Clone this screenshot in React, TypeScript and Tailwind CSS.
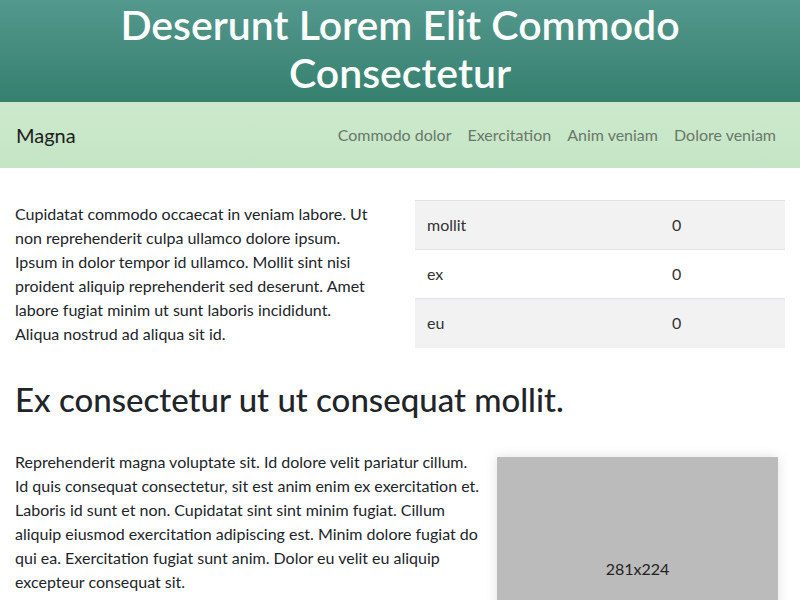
const NAV_LINKS = ['Commodo dolor', 'Exercitation', 'Anim veniam', 'Dolore veniam'];

const ROWS = [
  { name: 'mollit', value: 0, shaded: true },
  { name: 'ex', value: 0, shaded: false },
  { name: 'eu', value: 0, shaded: true },
];

export default function App() {
  return (
    <div className="min-h-screen bg-white text-[#212529] font-['Lato','Liberation_Sans',sans-serif]">
      {/* Title banner */}
      <header className="h-[102px] bg-gradient-to-b from-[#53988d] to-[#35806f] flex items-center justify-center px-4 pb-1">
        <h1 className="text-center text-white text-[41px] leading-[48px] font-semibold">
          Deserunt Lorem Elit Commodo Consectetur
        </h1>
      </header>

      {/* Nav */}
      <nav className="h-[66px] bg-gradient-to-b from-[#cde9cd] to-[#c5e5c5] flex items-center justify-between pl-4 pr-6">
        <span className="text-xl text-[#1c211c]">Magna</span>
        <ul className="flex gap-4 text-base text-[#6a786a]">
          {NAV_LINKS.map(l => (
            <li key={l}>{l}</li>
          ))}
        </ul>
      </nav>

      <main className="px-[15px]">
        <section className="flex gap-[30px] pt-8">
          <div className="w-[370px]">
            <p className="w-[358px] text-base leading-6 pt-[2px]">
              Cupidatat commodo occaecat in veniam labore. Ut non reprehenderit culpa ullamco dolore ipsum.
              Ipsum in dolor tempor id ullamco. Mollit sint nisi proident aliquip reprehenderit sed deserunt.
              Amet labore fugiat minim ut sunt laboris incididunt. Aliqua nostrud ad aliqua sit id.
            </p>
          </div>
          <table className="w-[370px] text-base text-[#333] border-collapse self-start">
            <tbody>
              {ROWS.map(r => (
                <tr key={r.name} className={`h-[49px] border-t border-[#dee2e6] ${r.shaded ? 'bg-[#f2f2f2]' : ''}`}>
                  <td className="w-[245px] px-3">{r.name}</td>
                  <td className="px-3">{r.value}</td>
                </tr>
              ))}
            </tbody>
          </table>
        </section>

        <h2 className="mt-[32px] text-[33px] leading-[38px] font-medium">
          Ex consectetur ut ut consequat mollit.
        </h2>

        <section className="flex mt-[32px]">
          <div className="w-[475px]">
            <p className="w-[465px] text-base leading-6">
              Reprehenderit magna voluptate sit. Id dolore velit pariatur cillum. Id quis consequat
              consectetur, sit est anim enim ex exercitation et. Laboris id sunt et non. Cupidatat sint sint
              minim fugiat. Cillum aliquip eiusmod exercitation adipiscing est. Minim dolore fugiat do qui ea.
              Exercitation fugiat sunt anim. Dolor eu velit eu aliquip excepteur consequat sit.
            </p>
          </div>
          <div className="ml-[7px] mt-[7px] w-[281px] h-[224px] shrink-0 bg-[#bbbbbb] shadow-[0_0_12px_rgba(0,0,0,0.12)] flex items-center justify-center text-base text-[#222]">
            281x224
          </div>
        </section>
      </main>
    </div>
  );
}
